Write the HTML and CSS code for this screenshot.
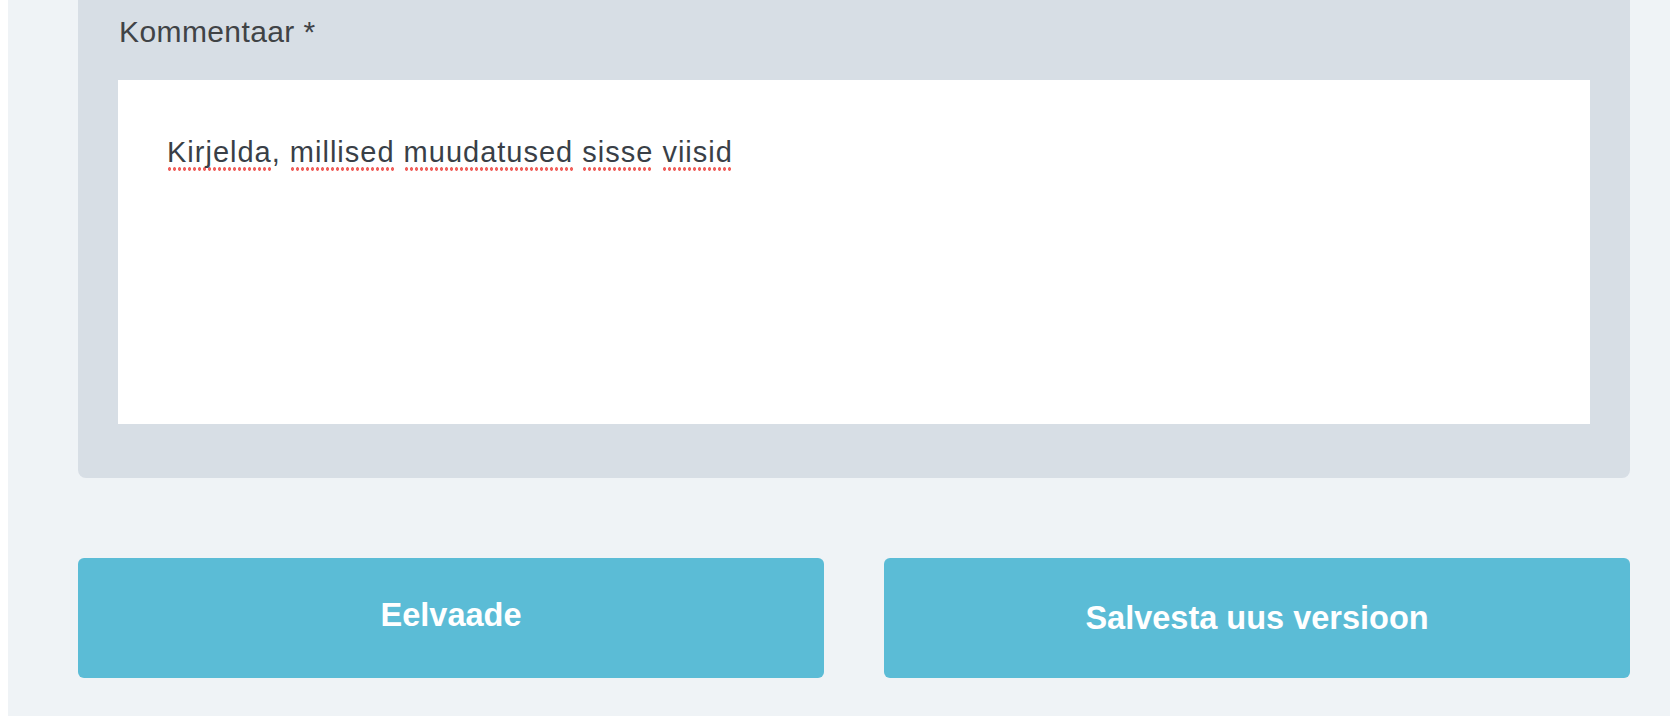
FILE: index.html
```html
<!DOCTYPE html>
<html lang="et">
<head>
<meta charset="utf-8">
<title>Kommentaar</title>
<link rel="stylesheet" href="styles.css">
</head>
<body>
<div class="page">
  <section class="panel">
    <label class="label" for="comment">Kommentaar *</label>
    <div class="textbox" id="comment" role="textbox" aria-multiline="true">
      <p class="text"><span class="sp">Kirjelda</span>, <span class="sp">millised</span> <span class="sp">muudatused</span> <span class="sp">sisse</span> <span class="sp">viisid</span></p>
    </div>
  </section>
  <div class="actions">
    <button class="btn btn-preview" type="button">Eelvaade</button>
    <button class="btn btn-save" type="button">Salvesta uus versioon</button>
  </div>
</div>
</body>
</html>
```
FILE: styles.css
```css
html, body {
  margin: 0;
  padding: 0;
  background: #ffffff;
}

body {
  font-family: "Liberation Sans", Arial, sans-serif;
}

.page {
  box-sizing: border-box;
  margin-left: 8px;
  height: 716px;
  background: #eff3f6;
  padding: 0 40px 0 70px;
}

.panel {
  background: #d7dee5;
  border-radius: 0 0 8px 8px;
  padding: 0 40px 54px;
}

.label {
  display: block;
  font-size: 30px;
  letter-spacing: 0.4px;
  line-height: 60px;
  color: #404346;
  margin: 0 0 20px 1px;
  position: relative;
  top: 2px;
}

.textbox {
  box-sizing: border-box;
  background: #ffffff;
  height: 344px;
  padding: 52px 49px;
}

.text {
  margin: 0;
  font-size: 29px;
  letter-spacing: 1px;
  line-height: 40px;
  color: #393f47;
}

.sp {
  padding-bottom: 3px;
  background-image: radial-gradient(circle at 2.5px 2px, #f0625e 1.5px, rgba(240, 98, 94, 0) 2px);
  background-size: 5px 4px;
  background-repeat: repeat-x;
  background-position: 0 100%;
}

.actions {
  display: grid;
  grid-template-columns: 1fr 1fr;
  gap: 60px;
  margin-top: 80px;
}

.btn {
  height: 120px;
  border: 0;
  border-radius: 6px;
  background: #5bbcd6;
  color: #ffffff;
  font-family: "Liberation Sans", Arial, sans-serif;
  font-size: 32.5px;
  font-weight: 700;
  padding: 0;
  cursor: pointer;
}

.btn-preview {
  padding-bottom: 6px;
}
```
